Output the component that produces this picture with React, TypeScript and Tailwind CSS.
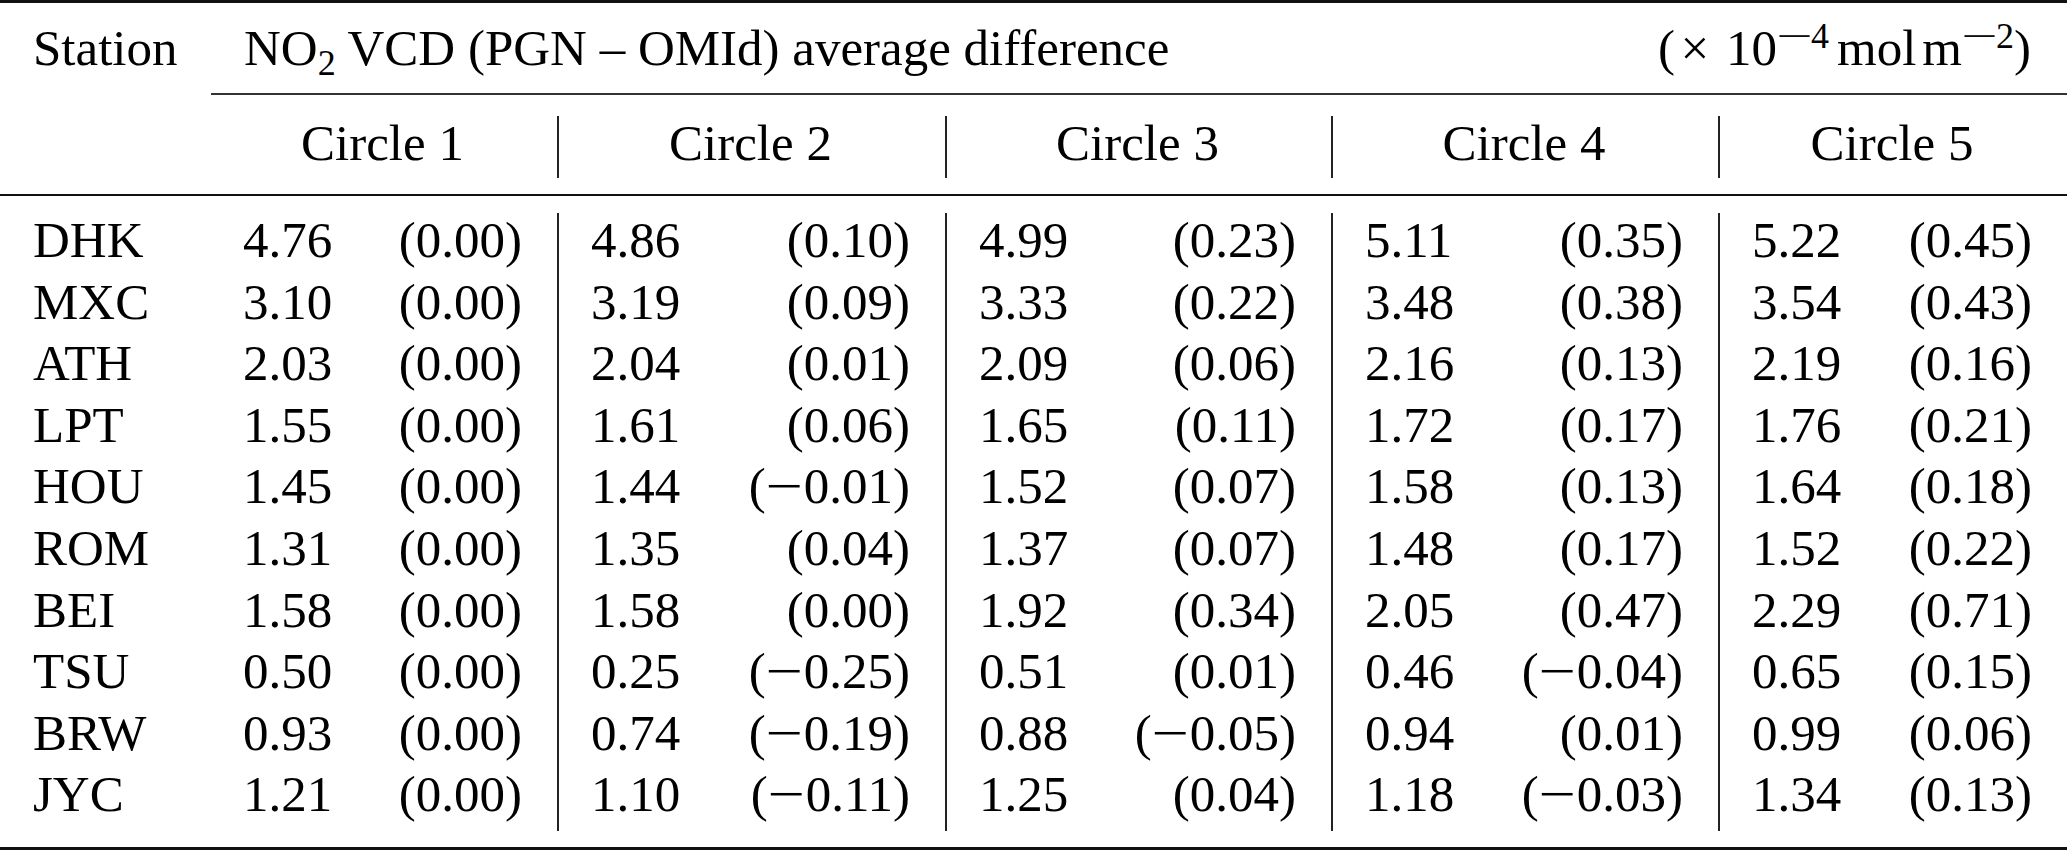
import React from "react";

type Cell = [string, string];

const rows: { st: string; cells: Cell[] }[] = [
  { st: "DHK", cells: [["4.76", "0.00"], ["4.86", "0.10"], ["4.99", "0.23"], ["5.11", "0.35"], ["5.22", "0.45"]] },
  { st: "MXC", cells: [["3.10", "0.00"], ["3.19", "0.09"], ["3.33", "0.22"], ["3.48", "0.38"], ["3.54", "0.43"]] },
  { st: "ATH", cells: [["2.03", "0.00"], ["2.04", "0.01"], ["2.09", "0.06"], ["2.16", "0.13"], ["2.19", "0.16"]] },
  { st: "LPT", cells: [["1.55", "0.00"], ["1.61", "0.06"], ["1.65", "0.11"], ["1.72", "0.17"], ["1.76", "0.21"]] },
  { st: "HOU", cells: [["1.45", "0.00"], ["1.44", "-0.01"], ["1.52", "0.07"], ["1.58", "0.13"], ["1.64", "0.18"]] },
  { st: "ROM", cells: [["1.31", "0.00"], ["1.35", "0.04"], ["1.37", "0.07"], ["1.48", "0.17"], ["1.52", "0.22"]] },
  { st: "BEI", cells: [["1.58", "0.00"], ["1.58", "0.00"], ["1.92", "0.34"], ["2.05", "0.47"], ["2.29", "0.71"]] },
  { st: "TSU", cells: [["0.50", "0.00"], ["0.25", "-0.25"], ["0.51", "0.01"], ["0.46", "-0.04"], ["0.65", "0.15"]] },
  { st: "BRW", cells: [["0.93", "0.00"], ["0.74", "-0.19"], ["0.88", "-0.05"], ["0.94", "0.01"], ["0.99", "0.06"]] },
  { st: "JYC", cells: [["1.21", "0.00"], ["1.10", "-0.11"], ["1.25", "0.04"], ["1.18", "-0.03"], ["1.34", "0.13"]] },
];

// circle column widths, bars sit on the left edge of circles 2-5
const cols = [
  "w-[346px]",
  "w-[388px] border-l-2 border-[#222]",
  "w-[386px] border-l-2 border-[#222]",
  "w-[387px] border-l-2 border-[#222]",
  "w-[349px] border-l-2 border-[#222]",
];

const Diff = ({ d }: { d: string }) => {
  const neg = d.startsWith("-");
  return (
    <span>
      (
      {neg && (
        <span className="inline-block w-[38px] text-center">
          <span className="inline-block scale-x-[1.3]">−</span>
        </span>
      )}
      {neg ? d.slice(1) : d})
    </span>
  );
};

const Sup = ({ n }: { n: string }) => (
  <span className="text-[36px] leading-none align-[17px]">
    <span className="inline-block w-[34px] text-center">
      <span className="inline-block scale-x-[1.8]">−</span>
    </span>
    {n}
  </span>
);

const App = () => {
  return (
    <div className="w-[2067px] h-[850px] bg-white text-black font-['Liberation_Serif',serif] text-[51px]">
      <div className="h-[3px] bg-[#111]" />

      <div className="flex h-[89.5px] pt-[14.5px] leading-[61.6px]">
        <div className="w-[211px] pl-[33px]">Station</div>
        <div className="flex flex-1 justify-between pl-[33px] pr-[36px]">
          <span>
            NO<span className="text-[36px] leading-none align-[-10px]">2</span> VCD (PGN – OMId) average
            difference
          </span>
          <span>
            (<span className="inline-block w-[34px] text-center ml-[3px] mr-[14px]">×</span>10
            <Sup n="4" />
            <span className="ml-[8px]">mol</span>
            <span className="ml-[6px]">m</span>
            <Sup n="2" />)
          </span>
        </div>
      </div>

      <div className="ml-[211px] h-[2px] bg-[#333]" />

      <div className="flex pt-[21.5px] pb-[16px]">
        <div className="w-[211px]" />
        {cols.map((c, i) => (
          <div key={i} className={`${c} h-[62px] leading-[54px] text-center pl-[32px] pr-[35px]`}>
            Circle {i + 1}
          </div>
        ))}
      </div>

      <div className="h-[2px] bg-[#111]" />

      <div className="flex pt-[17px] pb-[16px] leading-[61.6px]">
        <div className="w-[211px] pl-[33px] pb-[5px]">
          <div className="-mt-[3px]">
            {rows.map((r) => (
              <div key={r.st}>{r.st}</div>
            ))}
          </div>
        </div>
        {cols.map((c, i) => (
          <div key={i} className={`${c} pl-[32px] pr-[35px] pb-[5px]`}>
            <div className="-mt-[3px]">
              {rows.map((r) => (
                <div key={r.st} className="flex justify-between">
                  <span>{r.cells[i][0]}</span>
                  <Diff d={r.cells[i][1]} />
                </div>
              ))}
            </div>
          </div>
        ))}
      </div>

      <div className="h-[3px] bg-[#111]" />
    </div>
  );
};

export default App;
